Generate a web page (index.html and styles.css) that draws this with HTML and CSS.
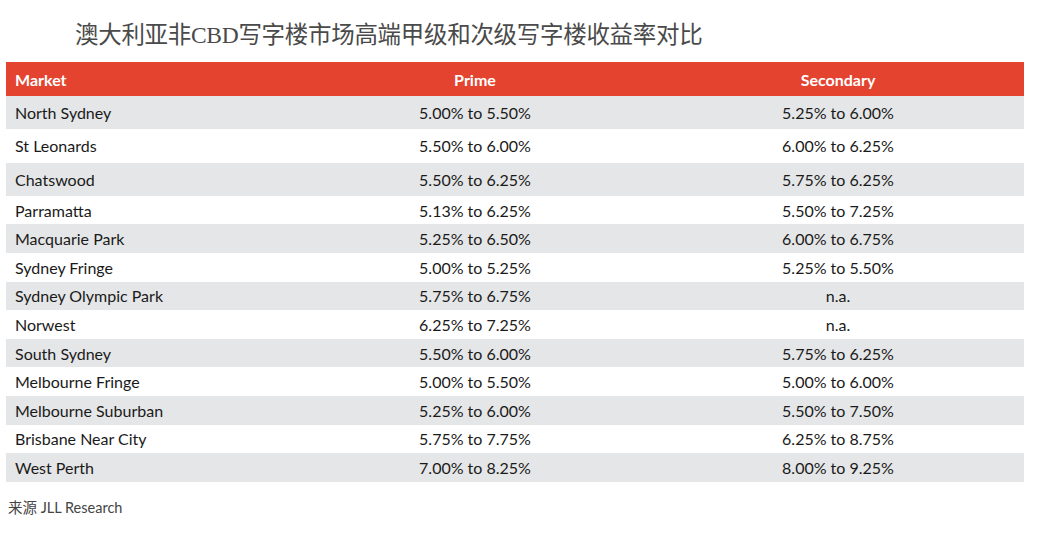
FILE: index.html
```html
<!DOCTYPE html>
<html lang="zh">
<head>
<meta charset="utf-8">
<link rel="stylesheet" href="styles.css">
</head>
<body>
<div class="page">
  <h1 class="title">澳大利亚非CBD写字楼市场高端甲级和次级写字楼收益率对比</h1>
  <table class="yields">
    <thead>
      <tr class="head"><th class="c-market">Market</th><th class="c-prime">Prime</th><th class="c-sec">Secondary</th></tr>
    </thead>
    <tbody>
      <tr class="lg alt"><td>North Sydney</td><td>5.00% to 5.50%</td><td>5.25% to 6.00%</td></tr>
      <tr class="lg"><td>St Leonards</td><td>5.50% to 6.00%</td><td>6.00% to 6.25%</td></tr>
      <tr class="lg alt"><td>Chatswood</td><td>5.50% to 6.25%</td><td>5.75% to 6.25%</td></tr>
      <tr class="sm"><td>Parramatta</td><td>5.13% to 6.25%</td><td>5.50% to 7.25%</td></tr>
      <tr class="sm alt"><td>Macquarie Park</td><td>5.25% to 6.50%</td><td>6.00% to 6.75%</td></tr>
      <tr class="sm"><td>Sydney Fringe</td><td>5.00% to 5.25%</td><td>5.25% to 5.50%</td></tr>
      <tr class="sm alt"><td>Sydney Olympic Park</td><td>5.75% to 6.75%</td><td>n.a.</td></tr>
      <tr class="sm"><td>Norwest</td><td>6.25% to 7.25%</td><td>n.a.</td></tr>
      <tr class="sm alt"><td>South Sydney</td><td>5.50% to 6.00%</td><td>5.75% to 6.25%</td></tr>
      <tr class="sm"><td>Melbourne Fringe</td><td>5.00% to 5.50%</td><td>5.00% to 6.00%</td></tr>
      <tr class="sm alt"><td>Melbourne Suburban</td><td>5.25% to 6.00%</td><td>5.50% to 7.50%</td></tr>
      <tr class="sm"><td>Brisbane Near City</td><td>5.75% to 7.75%</td><td>6.25% to 8.75%</td></tr>
      <tr class="sm alt"><td>West Perth</td><td>7.00% to 8.25%</td><td>8.00% to 9.25%</td></tr>
    </tbody>
  </table>
  <p class="source">来源 JLL Research</p>
</div>
</body>
</html>
```
FILE: styles.css
```css
html, body {
  margin: 0;
  padding: 0;
  background: #ffffff;
}
.page {
  width: 1046px;
  height: 536px;
  padding: 18px 0 0 6px;
  box-sizing: border-box;
  font-family: Lato, "Noto Sans CJK SC", sans-serif;
}
.title {
  margin: 0 0 0 69px;
  height: 44px;
  font-family: "Liberation Serif", "Noto Sans CJK SC", serif;
  font-weight: 400;
  font-size: 23.5px;
  line-height: 34px;
  color: #4a4a4a;
  letter-spacing: -0.3px;
}
.yields {
  width: 1018px;
  border-collapse: collapse;
  table-layout: fixed;
  font-size: 16px;
  color: #1a1a1a;
}
.yields th, .yields td {
  box-sizing: border-box;
  padding: 0;
  text-align: center;
  white-space: nowrap;
}
.c-market { width: 292px; }
.c-prime { width: 354px; }
.c-sec { width: 372px; }
.yields th:first-child, .yields td:first-child {
  text-align: left;
  padding-left: 9px;
}
.head {
  height: 34px;
  background: #e4432f;
  color: #ffffff;
}
.yields th {
  font-weight: 700;
}
.lg { height: 33.3px; }
.sm { height: 28.6px; }
.alt { background: #e5e6e7; }
.source {
  margin: 14px 0 0 2px;
  font-size: 14.5px;
  color: #444444;
}
```
